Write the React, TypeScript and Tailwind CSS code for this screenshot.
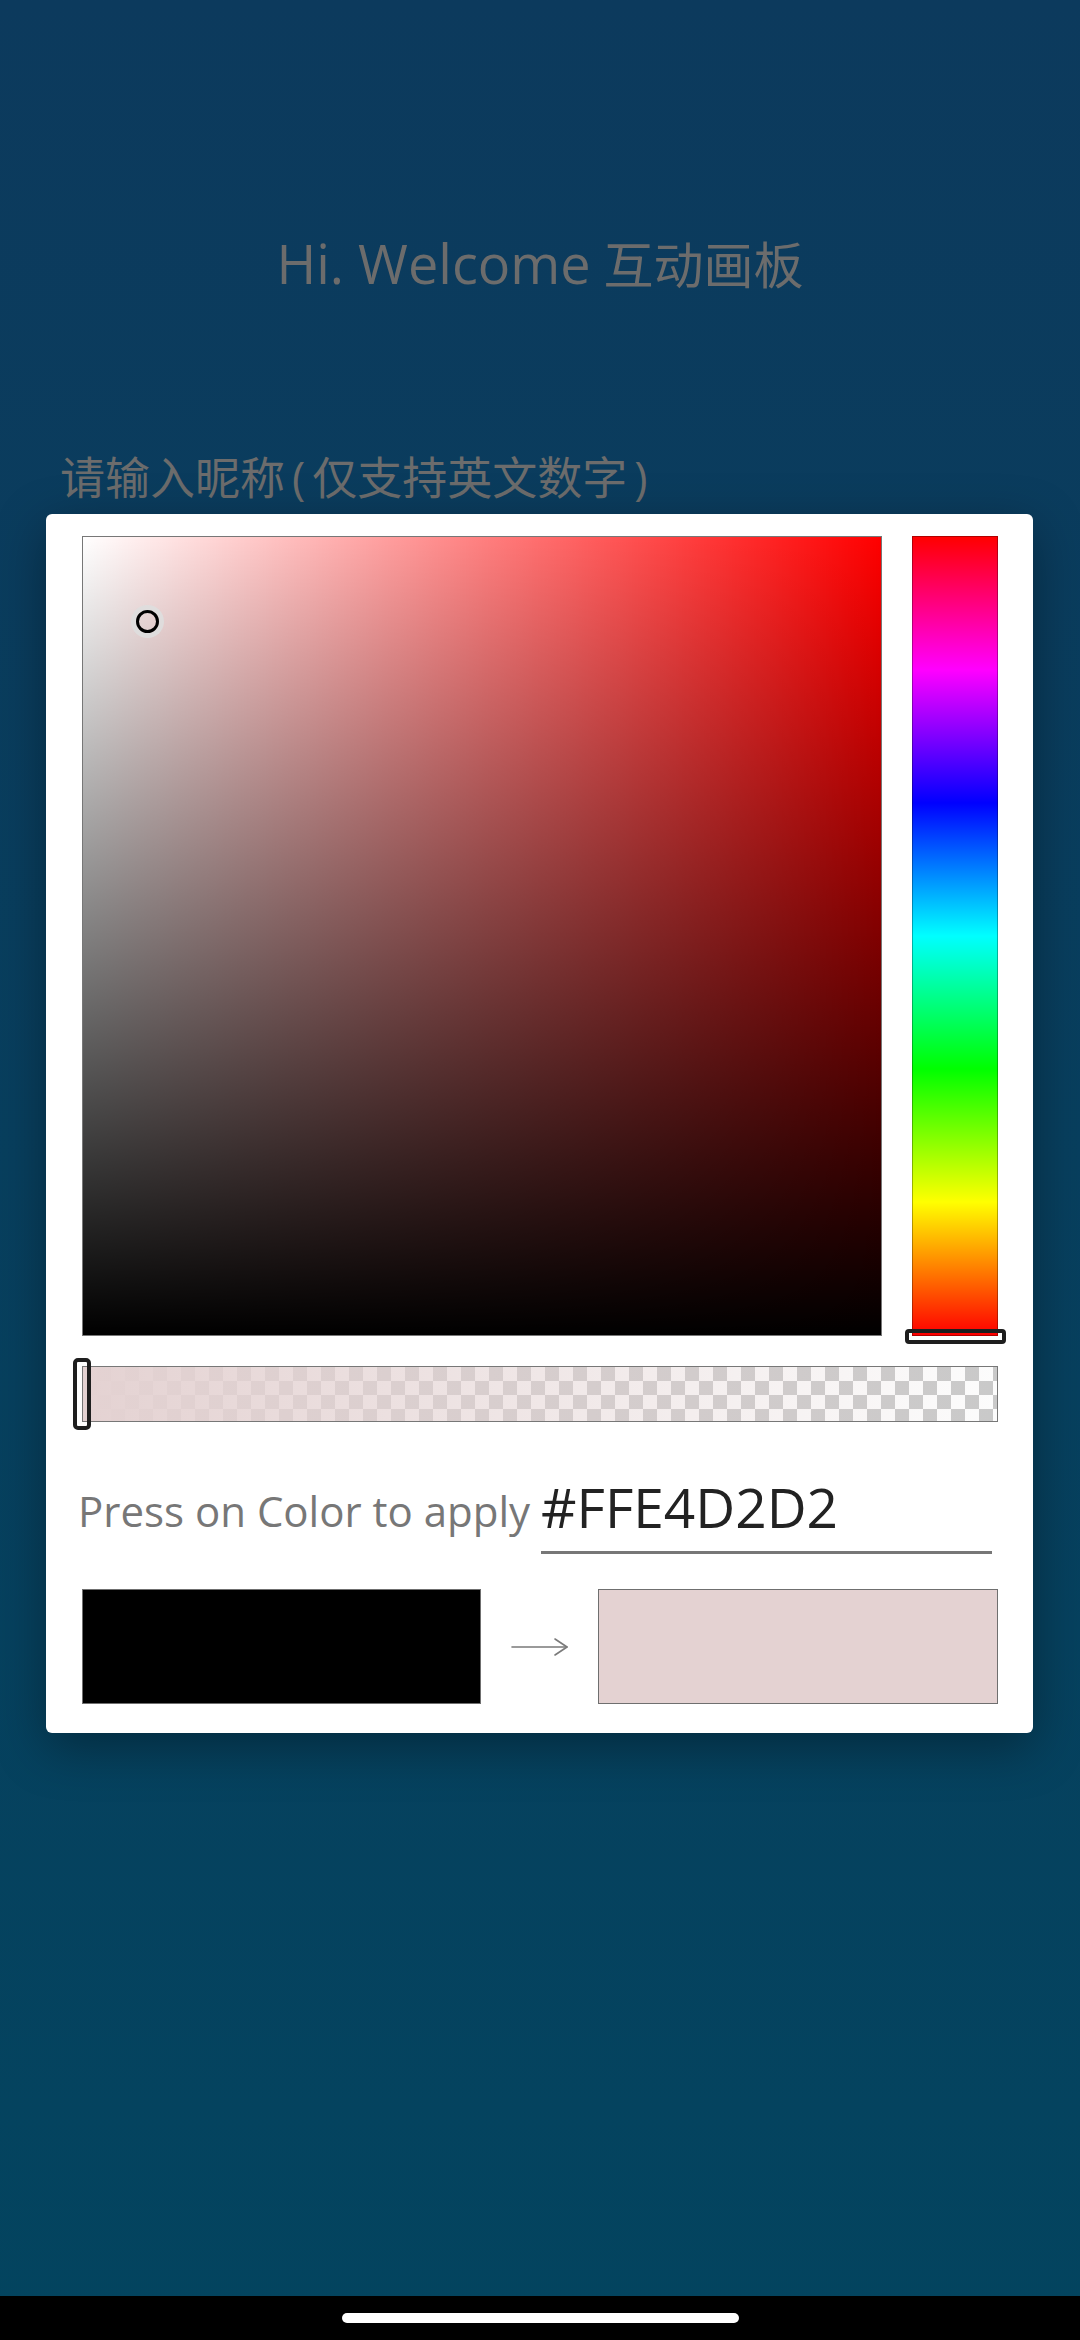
import React from 'react';

const SANS = "font-['Open_Sans','Noto_Sans_CJK_SC',sans-serif]";

function SaturationBox() {
  return (
    <div className="relative h-[800px] w-[800px] border border-[#777] bg-[#ff0000]">
      <div className="absolute inset-0 bg-[image:linear-gradient(to_top,#000,rgba(0,0,0,0)),linear-gradient(to_right,#fff,rgba(255,255,255,0))]" />
      {/* picker cursor */}
      <div className="absolute left-[53px] top-[73px] h-[23px] w-[23px] rounded-full border-[3px] border-black shadow-[0_0_0_5px_rgba(222,222,222,0.9)]" />
    </div>
  );
}

function HueBar() {
  return (
    <div className="relative h-[800px] w-[86px] border border-[rgba(0,0,0,0.3)] bg-[linear-gradient(to_bottom,#ff0000,#ff00ff,#0000ff,#00ffff,#00ff00,#ffff00,#ff0000)]">
      <div className="absolute left-[-8px] top-[792px] h-[15px] w-[101px] rounded-[4px] border-[4px] border-[#1e1e1e]" />
    </div>
  );
}

function AlphaBar() {
  return (
    <div className="relative mt-[30px] h-[56px] w-full border border-[#777] bg-[image:repeating-conic-gradient(#c9c9c9_0_25%,#fcfcfc_0_50%)] bg-[length:28px_28px]">
      <div className="absolute inset-0 bg-[linear-gradient(to_right,rgba(228,210,210,1),rgba(228,210,210,0))]" />
      <div className="absolute left-[-10px] top-[-9px] h-[72px] w-[18px] rounded-[5px] border-[4px] border-[#1e1e1e]" />
    </div>
  );
}

function ColorPickerDialog() {
  return (
    <div className="absolute left-[46px] top-[514px] w-[987px] rounded-[6px] bg-white pb-[29px] pl-[36px] pr-[35px] pt-[22px] shadow-[0_14px_50px_rgba(0,0,0,0.35)]">
      <div className="flex gap-[30px]">
        <SaturationBox />
        <HueBar />
      </div>

      <AlphaBar />

      {/* hex input */}
      <div className="mt-[57px] flex items-end justify-between pr-[6px]">
        <span className={`${SANS} -ml-[4px] mb-[22px] text-[42px] leading-none text-[#777]`}>Press on Color to apply</span>
        <div className={`${SANS} w-[451px] border-b-[3px] border-[#777] pb-[17px] text-[55px] leading-none text-[#222]`}>
          #FFE4D2D2
        </div>
      </div>

      {/* old -> new */}
      <div className="mt-[35px] flex items-center">
        <div className="h-[115px] w-[399px] border border-[#6f6f6f] bg-black" />
        <div className="flex flex-1 justify-center">
          <svg width="58" height="20" viewBox="0 0 58 20" fill="none" stroke="#7a7a7a" strokeWidth="1.6" strokeLinecap="round" strokeLinejoin="round">
            <path d="M1 10H56" />
            <path d="M44 2L56 10L44 18" />
          </svg>
        </div>
        <div className="h-[115px] w-[400px] border border-[#6f6f6f] bg-[#e4d2d2]" />
      </div>
    </div>
  );
}

export default function App() {
  return (
    <div className="relative flex h-[2340px] w-full flex-col overflow-hidden bg-gradient-to-b from-[#0c3a5d] to-[#03445f]">
      <main className="flex-1">
        <h1 className={`${SANS} mt-[238px] text-center text-[50px] leading-[50px] text-[#6c6c6c]`}>
          <span className="text-[54px]">Hi. Welcome</span> 互动画板
        </h1>
        <p className={`${SANS} mt-[165px] pl-[60px] text-[45px] leading-[45px] text-[#6c6c6c]`}>
          请输入昵称<span className="px-[7px]">(</span>仅支持英文数字<span className="px-[7px]">)</span>
        </p>
      </main>

      {/* system nav bar */}
      <div className="flex h-[44px] items-center justify-center bg-black">
        <div className="h-[10px] w-[397px] rounded-full bg-white" />
      </div>

      <ColorPickerDialog />
    </div>
  );
}
